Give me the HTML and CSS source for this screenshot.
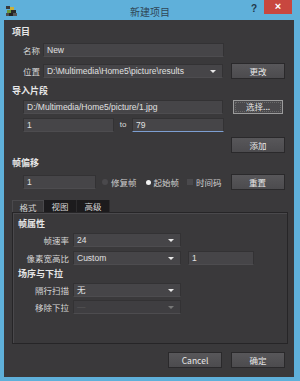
FILE: index.html
```html
<!DOCTYPE html>
<html lang="zh">
  <head>
    <meta charset="UTF-8" />
    <link rel="stylesheet" href="styles.css">
  </head>
  <body>
    <div class="window">
      <div class="titlebar">
        <svg class="app-icon" width="11" height="11" viewBox="0 0 11 11">
          <rect x="0" y="0" width="4" height="3" fill="#3a3a3a" />
          <rect x="4" y="1" width="4" height="3" fill="#c9b03a" />
          <rect x="1" y="4" width="4" height="3" fill="#6c9a3c" />
          <rect x="5" y="4" width="5" height="3" fill="#2a2a2a" />
          <rect x="0" y="7" width="3" height="3" fill="#4d4d4d" />
          <rect x="3" y="7" width="4" height="3" fill="#222" />
          <rect x="7" y="7" width="4" height="3" fill="#555" />
        </svg>
        <div class="title">新建项目</div>
        <div class="help">?</div>
        <div class="close">×</div>
      </div>

      <div class="body">
        <div class="heading h-project">项目</div>
        <div class="row r-name">
          <span class="label">名称</span>
          <div class="field wide">New</div>
        </div>
        <div class="row r-loc">
          <span class="label">位置</span>
          <div class="field wide select">D:\Multimedia\Home5\picture\results</div>
          <div class="btn">更改</div>
        </div>

        <div class="heading h-import">导入片段</div>
        <div class="row r-path">
          <div class="field path">D:/Multimedia/Home5/picture/1.jpg</div>
          <div class="btn focus">选择...</div>
        </div>
        <div class="row r-range">
          <div class="field from">1</div>
          <span class="to">to</span>
          <div class="field until">79</div>
        </div>
        <div class="row r-add">
          <div class="btn">添加</div>
        </div>

        <div class="heading h-offset">帧偏移</div>
        <div class="row r-offset">
          <div class="field offset">1</div>
          <span class="radio"></span><span class="opt">修复帧</span>
          <span class="radio on"></span><span class="opt">起始帧</span>
          <span class="check"></span><span class="opt">时间码</span>
          <div class="btn">重置</div>
        </div>

        <div class="tabs">
          <div class="tab active">格式</div>
          <div class="tab">视图</div>
          <div class="tab">高级</div>
        </div>
        <div class="panel">
          <div class="heading p-head">帧属性</div>
          <div class="prow p-rate">
            <span class="plabel">帧速率</span>
            <div class="field pfield select">24</div>
          </div>
          <div class="prow p-aspect">
            <span class="plabel">像素宽高比</span>
            <div class="field pfield select">Custom</div>
            <div class="field ratio">1</div>
          </div>
          <div class="heading p-head2">场序与下拉</div>
          <div class="prow p-scan">
            <span class="plabel">隔行扫描</span>
            <div class="field pfield select">无</div>
          </div>
          <div class="prow p-pull">
            <span class="plabel">移除下拉</span>
            <div class="field pfield select disabled">—</div>
          </div>
        </div>

        <div class="footer">
          <div class="btn">Cancel</div>
          <div class="btn">确定</div>
        </div>
      </div>
    </div>
  </body>
</html>
```

FILE: styles.css
```css
* {
  margin: 0;
  padding: 0;
  box-sizing: border-box;
}
body {
  width: 300px;
  height: 381px;
  overflow: hidden;
  font-family: "Noto Sans CJK SC", "Liberation Sans", sans-serif;
  font-size: 8.5px;
  color: #dcdcdc;
}
.window {
  width: 300px;
  height: 381px;
  background: #5fb0da;
}
.titlebar {
  height: 20px;
  display: flex;
  align-items: flex-start;
}
.app-icon {
  margin: 6px 0 0 6px;
}
.title {
  flex: 1;
  text-align: center;
  font-size: 10px;
  line-height: 12px;
  margin-top: 6px;
  padding-left: 32px;
  color: #2f4656;
}
.help {
  width: 12px;
  margin-top: 3px;
  font-family: "Liberation Sans", sans-serif;
  font-weight: bold;
  font-size: 10px;
  color: #22384a;
}
.close {
  width: 28px;
  height: 14px;
  margin: 0 8px 0 1px;
  background: #c8473f;
  color: #fff;
  text-align: center;
  font-family: "Liberation Sans", sans-serif;
  font-weight: bold;
  font-size: 11px;
  line-height: 13px;
}
.body {
  margin: 0 6px 0 4px;
  height: 357px;
  background: #3a393b;
  padding: 6px 0 0 8px;
}
.heading {
  height: 12px;
  line-height: 12px;
  font-weight: bold;
  font-size: 9px;
  color: #e6e6e6;
}
.h-import { margin-top: 6px; }
.h-offset { margin-top: 4px; }
.row {
  display: flex;
  align-items: center;
  padding-left: 11px;
}
.r-name { margin-top: 5px; height: 14px; }
.r-loc { margin-top: 6px; height: 16px; }
.r-path { margin-top: 2px; height: 15px; }
.r-range { margin-top: 3px; height: 15px; }
.r-add { margin-top: 5px; height: 16px; justify-content: flex-end; }
.r-offset { margin-top: 5px; height: 16px; }
.label {
  width: 20px;
  color: #d6d6d6;
}
.field {
  height: 14px;
  line-height: 13px;
  padding-left: 3px;
  background: #464548;
  border: 1px solid #333234;
  border-bottom-color: #4d4c4f;
  color: #e0e0e0;
  font-family: "Liberation Sans", "Noto Sans CJK SC", sans-serif;
  font-size: 8.5px;
  position: relative;
  white-space: nowrap;
  overflow: hidden;
}
.wide { width: 181px; }
.path { width: 201px; }
.from { width: 91px; }
.until {
  width: 92px;
  border-bottom: 1px solid #7d9fd2;
}
.to {
  width: 18px;
  text-align: center;
  font-family: "Liberation Sans", sans-serif;
  font-size: 8px;
}
.offset { width: 73px; }
.select::after {
  content: "";
  position: absolute;
  right: 6px;
  top: 5px;
  border-left: 3px solid transparent;
  border-right: 3px solid transparent;
  border-top: 3px solid #e8e8e8;
}
.disabled {
  color: #5a5a5a;
  background: #3f3e41;
}
.disabled::after {
  border-top-color: #777;
}
.btn {
  width: 54px;
  height: 16px;
  margin-left: auto;
  margin-right: 9px;
  background: linear-gradient(#58575a, #4c4b4e);
  border: 1px solid #2a292b;
  text-align: center;
  line-height: 14px;
  color: #e8e8e8;
  font-size: 8.5px;
}
.r-loc .btn { margin-left: 8px; }
.r-path .btn { margin-left: 10px; }
.focus {
  width: 50px;
  height: 14px;
  margin-right: 11px;
  line-height: 11px;
  background: #4a494c;
  border: 1px solid #9c9c9c;
  outline: 1px dotted #6a6a6a;
  outline-offset: -3px;
}
.r-offset .btn { margin-left: 9px; }
.radio,
.check {
  width: 6px;
  height: 6px;
  margin: 0 3px 0 5px;
  border-radius: 50%;
  background: #4a494c;
}
.radio:first-of-type { margin-left: 6px; }
.radio.on {
  background: #f2f2f2;
  width: 5px;
  height: 5px;
  margin-left: 9px;
}
.check {
  border-radius: 0;
  margin-left: 8px;
}
.opt {
  color: #d0d0d0;
}
.tabs {
  margin-top: 10px;
  height: 12px;
  display: flex;
}
.tab {
  width: 33px;
  height: 12px;
  line-height: 12px;
  text-align: center;
  background: #1c1b1d;
  color: #d4d4d4;
  border-right: 1px solid #2c2b2d;
}
.tab.active {
  width: 32px;
  background: #3a393b;
  border: 1px solid #4a494c;
  border-bottom: none;
}
.panel {
  width: 276px;
  height: 132px;
  border: 1px solid #262527;
  box-shadow: inset 1px 1px 0 #4a494c;
  padding: 5px 0 0 5px;
}
.prow {
  display: flex;
  align-items: center;
  height: 14px;
}
.p-rate { margin-top: 3px; }
.p-aspect { margin-top: 4px; }
.p-head2 { margin-top: 3px; }
.p-scan { margin-top: 3px; }
.p-pull { margin-top: 3px; }
.plabel {
  width: 55px;
  padding-right: 4px;
  text-align: right;
  color: #d6d6d6;
}
.pfield { width: 108px; }
.ratio {
  width: 66px;
  margin-left: 7px;
}
.footer {
  margin-top: 8px;
  height: 16px;
  display: flex;
  justify-content: flex-end;
}
.footer .btn { margin-left: 0; }
```
